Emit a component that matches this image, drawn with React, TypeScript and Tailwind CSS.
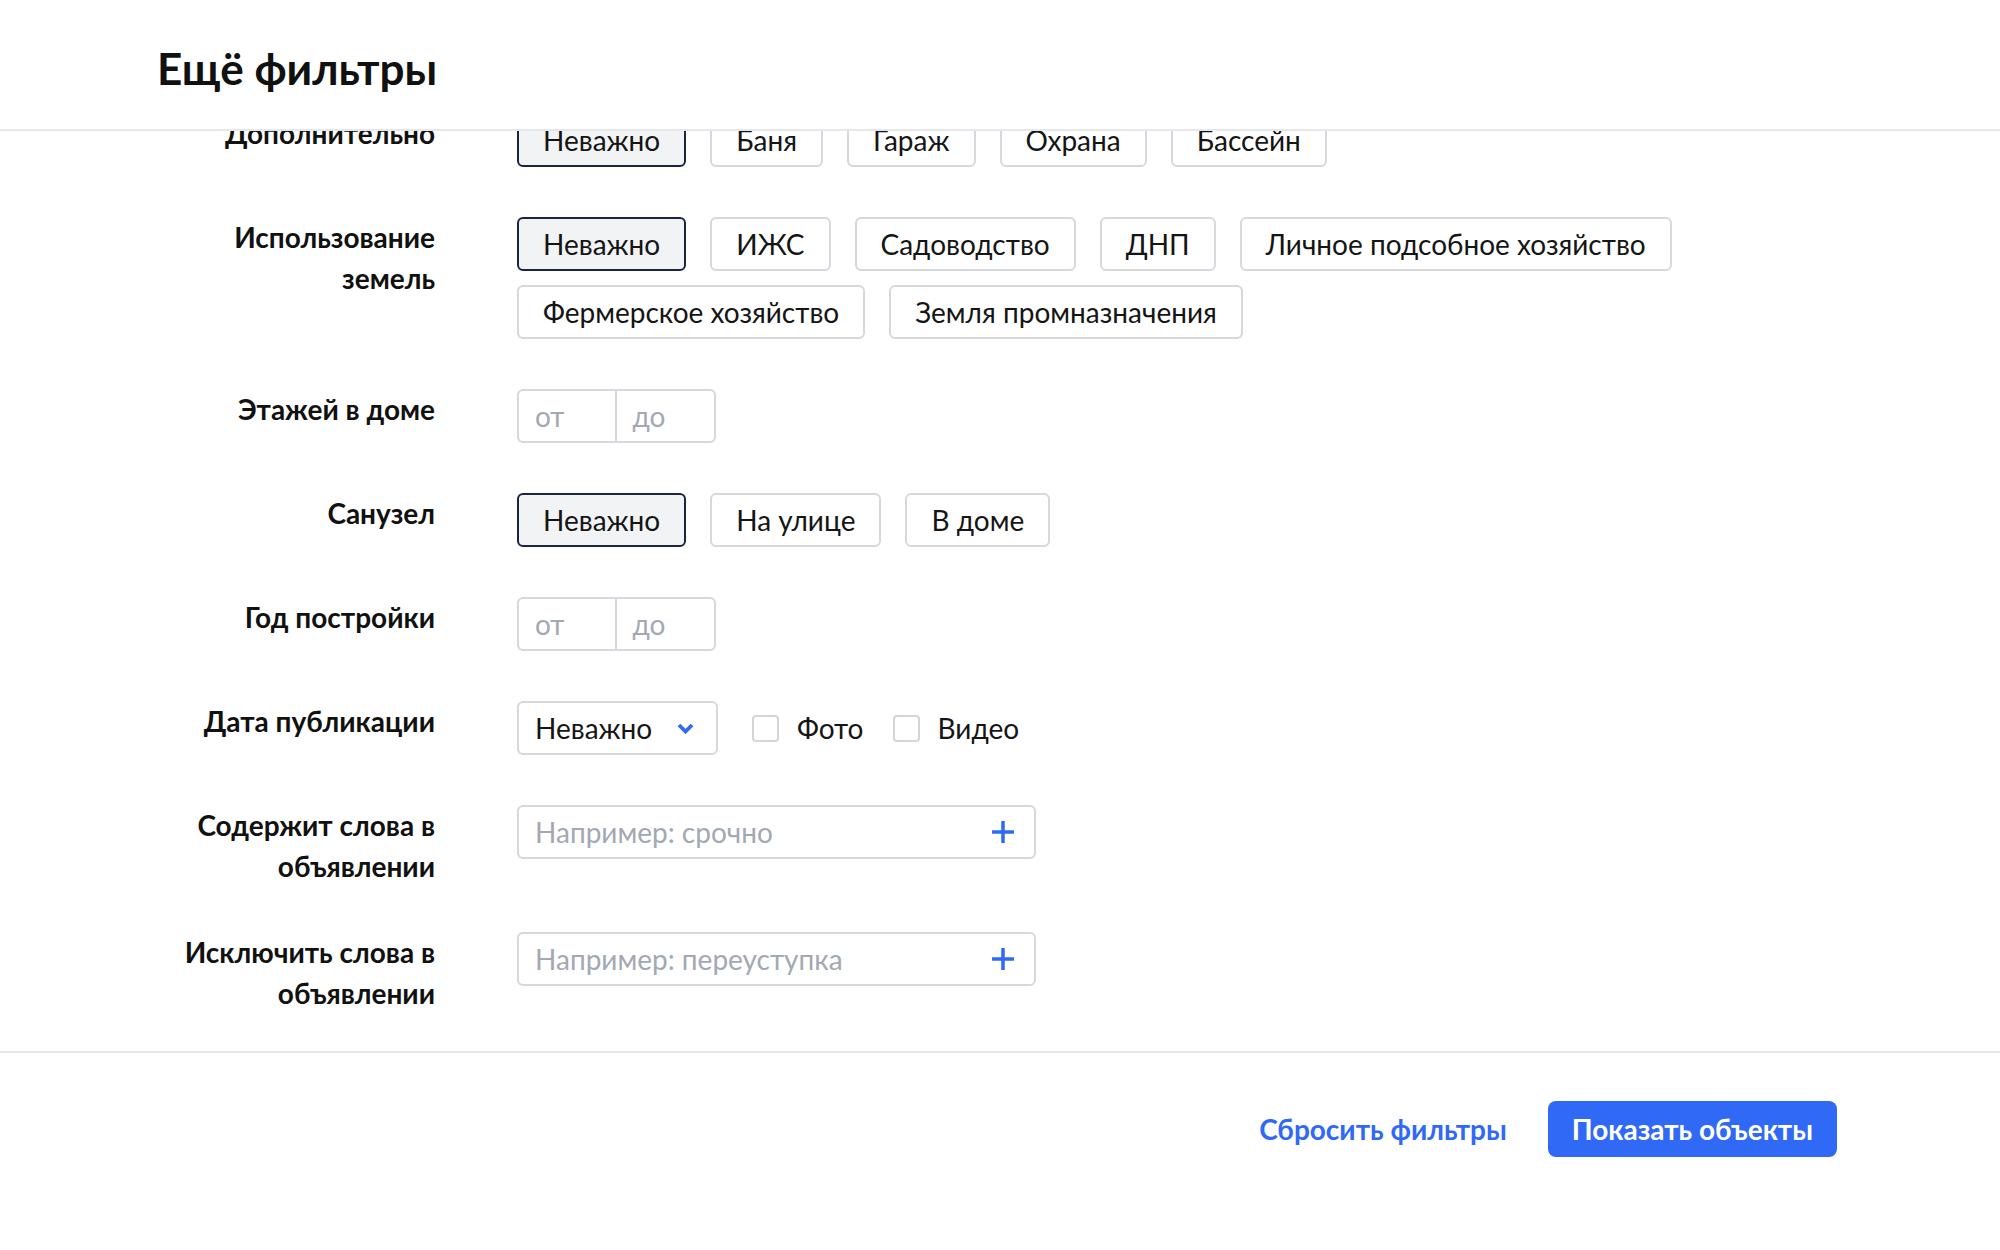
import React from 'react';

const BLUE = 'text-[#2f69f5]';

interface ChipProps {
  label: string;
  active?: boolean;
}

const Chip: React.FC<ChipProps> = ({ label, active }) => (
  <button
    type="button"
    className={`h-[54px] px-[24px] rounded-[6px] border-2 text-[28px] leading-none text-[#151515] ${
      active ? 'border-[#1b2442] bg-[#f2f3f5]' : 'border-[#d6d8dd] bg-white'
    }`}
  >
    {label}
  </button>
);

const ChipGroup: React.FC<{ options: string[] }> = ({ options }) => (
  <div className="flex flex-wrap gap-x-[24px] gap-y-[14px]">
    {options.map((o, i) => (
      <Chip key={o} label={o} active={i === 0} />
    ))}
  </div>
);

const Row: React.FC<{ label: React.ReactNode; children: React.ReactNode; className?: string }> = ({
  label,
  children,
  className = '',
}) => (
  <div className={`flex items-start ${className}`}>
    <div className="w-[278px] shrink-0 text-right text-[28px] font-bold leading-[41px] text-[#111111]">
      {label}
    </div>
    <div className="ml-[82px] flex-1 pr-[157px]">{children}</div>
  </div>
);

const RangeInput = () => (
  <div className="flex h-[54px] w-[199px] rounded-[6px] border-2 border-[#d6d8dd] text-[28px] text-[#a3a8b3]">
    <div className="flex w-1/2 items-center border-r-2 border-[#d6d8dd] pl-[16px]">от</div>
    <div className="flex w-1/2 items-center pl-[16px]">до</div>
  </div>
);

const Checkbox: React.FC<{ label: string }> = ({ label }) => (
  <label className="flex items-center gap-[18px] text-[28px] text-[#151515]">
    <span className="h-[27px] w-[27px] rounded-[4px] border-2 border-[#d3d5da] bg-white" />
    {label}
  </label>
);

const PlusIcon = () => (
  <svg width="24" height="24" viewBox="0 0 24 24" className={BLUE}>
    <path d="M12 1v22M1 12h22" stroke="currentColor" strokeWidth="3.5" fill="none" />
  </svg>
);

const WordsInput: React.FC<{ placeholder: string }> = ({ placeholder }) => (
  <div className="flex h-[54px] w-[519px] items-center justify-between rounded-[6px] border-2 border-[#d6d8dd] pl-[16px] pr-[19px]">
    <span className="text-[28px] text-[#a3a8b3]">{placeholder}</span>
    <PlusIcon />
  </div>
);

export default function App() {
  return (
    <div className="flex h-[1250px] w-full flex-col bg-white font-['Lato',sans-serif]">
      {/* Header */}
      <div className="flex h-[131px] shrink-0 items-center border-b-2 border-[#e6e7eb] pl-[157px] pt-[6px]">
        <h1 className="text-[44px] font-bold leading-none text-[#111111]">Ещё фильтры</h1>
      </div>

      {/* Scrolled body */}
      <div className="flex-1 overflow-hidden">
        <div className="-mt-[18px] flex flex-col gap-[50px] pl-[157px]">
          <Row label="Дополнительно">
            <ChipGroup options={['Неважно', 'Баня', 'Гараж', 'Охрана', 'Бассейн']} />
          </Row>
          <Row label={<>Использование<br />земель</>}>
            <ChipGroup
              options={[
                'Неважно',
                'ИЖС',
                'Садоводство',
                'ДНП',
                'Личное подсобное хозяйство',
                'Фермерское хозяйство',
                'Земля промназначения',
              ]}
            />
          </Row>
          <Row label="Этажей в доме">
            <RangeInput />
          </Row>
          <Row label="Санузел">
            <ChipGroup options={['Неважно', 'На улице', 'В доме']} />
          </Row>
          <Row label="Год постройки">
            <RangeInput />
          </Row>
          <Row label="Дата публикации">
            <div className="flex items-center">
              <div className="flex h-[54px] w-[201px] items-center justify-between rounded-[6px] border-2 border-[#d6d8dd] pl-[16px] pr-[22px] text-[28px] text-[#151515]">
                Неважно
                <svg width="17" height="11" viewBox="0 0 17 11" className={BLUE}>
                  <path d="M2 2l6.5 6.5L15 2" stroke="currentColor" strokeWidth="3.8" fill="none" />
                </svg>
              </div>
              <div className="ml-[34px] flex items-center gap-[29px]">
                <Checkbox label="Фото" />
                <Checkbox label="Видео" />
              </div>
            </div>
          </Row>
          <Row label={<>Содержит слова в<br />объявлении</>}>
            <WordsInput placeholder="Например: срочно" />
          </Row>
          <Row label={<>Исключить слова в<br />объявлении</>} className="-mt-[5px]">
            <WordsInput placeholder="Например: переуступка" />
          </Row>
        </div>
      </div>

      {/* Footer */}
      <div className="flex h-[199px] shrink-0 items-start justify-end gap-[41px] border-t-2 border-[#e6e7eb] pr-[163px] pt-[48px]">
        <button type="button" className={`h-[56px] text-[28px] font-bold ${BLUE}`}>
          Сбросить фильтры
        </button>
        <button
          type="button"
          className="h-[56px] rounded-[8px] bg-[#2f69f5] px-[24px] text-[28px] font-bold text-white"
        >
          Показать объекты
        </button>
      </div>
    </div>
  );
}
